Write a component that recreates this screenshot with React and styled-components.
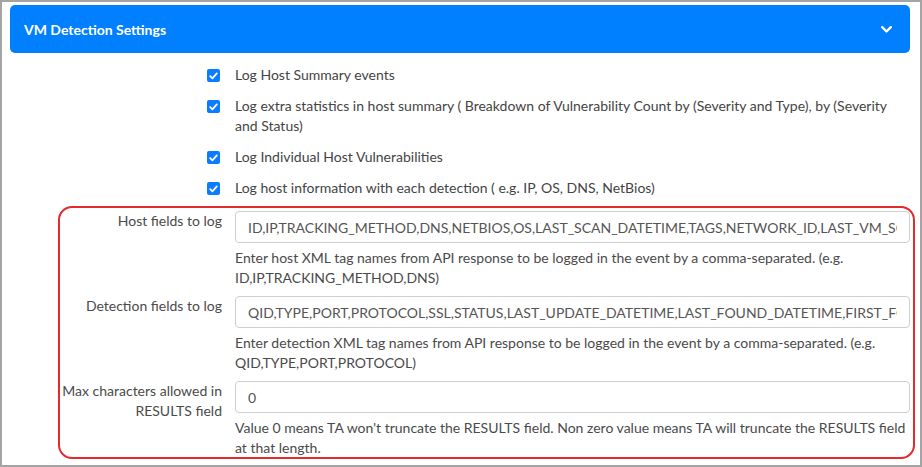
import React from "react";
import styled, { createGlobalStyle } from "styled-components";

const GlobalStyle = createGlobalStyle`
  html, body { margin: 0; padding: 0; background: #fff; }
  body { font-family: Lato, "Open Sans", sans-serif; }
  * { box-sizing: border-box; }
`;

const Frame = styled.div`
  position: relative;
  width: 922px;
  height: 467px;
  overflow: hidden;
  border: 2px solid #a4a4a4;
  padding: 3px 10px 0 8px;
  background: #fff;
  color: #4a4a4a;
  font-size: 14px;
`;

const Header = styled.div`
  height: 48px;
  background: #0080ff;
  border-radius: 5px;
  display: flex;
  align-items: center;
  justify-content: space-between;
  padding: 0 18px 0 14px;
`;

const Title = styled.div`
  color: #fff;
  font-weight: 700;
  font-size: 14px;
`;

const CheckList = styled.div`
  display: flex;
  flex-direction: column;
  gap: 11px;
  padding-top: 12px;
`;

const Row = styled.div`
  display: grid;
  grid-template-columns: 212px 1fr;
  column-gap: 13px;
`;

const BoxCell = styled.div`
  display: flex;
  justify-content: flex-end;
  padding: 4px 2px 0 0;
`;

const Box = styled.span`
  width: 13px;
  height: 13px;
  border-radius: 2px;
  background: #0a7cff;
  display: flex;
  align-items: center;
  justify-content: center;
`;

const CheckText = styled.div`
  line-height: 20px;
  color: #444;
`;

const FormSection = styled.div`
  position: relative;
  margin-top: 13px;
  display: flex;
  flex-direction: column;
  gap: 8px;
`;

const Label = styled.div`
  text-align: right;
  line-height: 20px;
  color: #4a4a4a;
`;

const Field = styled.div`
  display: flex;
  flex-direction: column;
  min-width: 0;
`;

const Input = styled.input`
  height: 32px;
  width: 100%;
  border: 1px solid #cfcfcf;
  border-radius: 4px;
  padding: 0 12px;
  font-family: inherit;
  font-size: 14px;
  color: #555;
  background: #fff;
  outline: none;
`;

const Help = styled.div`
  margin-top: 5px;
  line-height: 20px;
  color: #4a4a4a;
`;

const Highlight = styled.div`
  position: absolute;
  top: -5px;
  left: 48px;
  right: -5px;
  height: 253px;
  border: 2.5px solid #e32b2b;
  border-radius: 14px;
  pointer-events: none;
`;

const Chevron = () => (
  <svg width="11" height="7" viewBox="0 0 11 7">
    <polyline
      points="1.2,1.2 5.5,5.5 9.8,1.2"
      fill="none"
      stroke="#fff"
      strokeWidth="2.4"
      strokeLinecap="round"
      strokeLinejoin="round"
    />
  </svg>
);

const Check = () => (
  <svg width="9" height="8" viewBox="0 0 9 8">
    <polyline
      points="1.2,4.2 3.4,6.4 7.8,1.4"
      fill="none"
      stroke="#fff"
      strokeWidth="1.8"
      strokeLinecap="round"
      strokeLinejoin="round"
    />
  </svg>
);

const checks = [
  "Log Host Summary events",
  "Log extra statistics in host summary ( Breakdown of Vulnerability Count by (Severity and Type), by (Severity and Status)",
  "Log Individual Host Vulnerabilities",
  "Log host information with each detection ( e.g. IP, OS, DNS, NetBios)",
];

const fields = [
  {
    label: "Host fields to log",
    value:
      "ID,IP,TRACKING_METHOD,DNS,NETBIOS,OS,LAST_SCAN_DATETIME,TAGS,NETWORK_ID,LAST_VM_SCANNED_DATE,LAST_VM_AUTH_SCANNED_DATE",
    help: "Enter host XML tag names from API response to be logged in the event by a comma-separated. (e.g. ID,IP,TRACKING_METHOD,DNS)",
  },
  {
    label: "Detection fields to log",
    value:
      "QID,TYPE,PORT,PROTOCOL,SSL,STATUS,LAST_UPDATE_DATETIME,LAST_FOUND_DATETIME,FIRST_FOUND_DATETIME,LAST_TEST_DATETIME",
    help: "Enter detection XML tag names from API response to be logged in the event by a comma-separated. (e.g. QID,TYPE,PORT,PROTOCOL)",
  },
  {
    label: (
      <>
        Max characters allowed in
        <br />
        RESULTS field
      </>
    ),
    value: "0",
    help: "Value 0 means TA won't truncate the RESULTS field. Non zero value means TA will truncate the RESULTS field at that length.",
  },
  { label: "", value: "", help: "" },
];

export default function App() {
  return (
    <>
      <GlobalStyle />
      <Frame>
        <Header>
          <Title>VM Detection Settings</Title>
          <Chevron />
        </Header>
        <CheckList>
          {checks.map((c) => (
            <Row key={c}>
              <BoxCell>
                <Box>
                  <Check />
                </Box>
              </BoxCell>
              <CheckText>{c}</CheckText>
            </Row>
          ))}
        </CheckList>
        <FormSection>
          {fields.map((f, i) => (
            <Row key={i}>
              <Label>{f.label}</Label>
              <Field>
                <Input readOnly value={f.value} />
                {f.help && <Help>{f.help}</Help>}
              </Field>
            </Row>
          ))}
          <Highlight />
        </FormSection>
      </Frame>
    </>
  );
}
